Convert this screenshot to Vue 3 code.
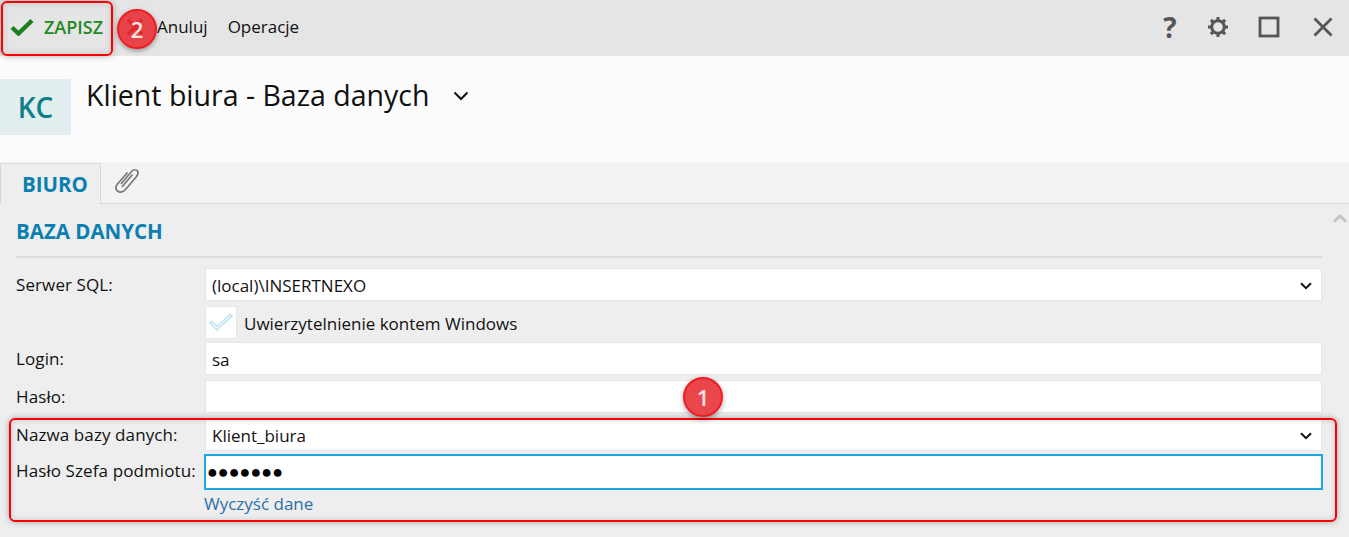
<template>
  <div class="window">
    <div class="toolbar">
      <button class="btn save">
        <svg width="24" height="18" viewBox="0 0 24 18"><path d="M2 9.500L8.500 15.500L22 2.500" fill="none" stroke="#1f7f1f" stroke-width="4.400"/></svg>
        <span>ZAPISZ</span>
      </button>
      <svg class="cancel-icon" width="16" height="18" viewBox="0 0 16 18"><path d="M1 1.500L15 16.500M15 1.500L1 16.500" fill="none" stroke="#7a1012" stroke-width="3.500"/></svg>
      <span class="tool-link">Anuluj</span>
      <span class="tool-link">Operacje</span>
      <div class="tool-icons">
        <span class="help">?</span>
        <svg class="gear" width="24" height="24" viewBox="0 0 24 24"><g fill="none" stroke="#555" stroke-width="3"><circle cx="12" cy="12" r="6.300"/><path d="M12 2v3.500M12 18.500v3.500M2 12h3.500M18.500 12h3.500M4.900 4.900l2.500 2.500M16.600 16.600l2.500 2.500M4.900 19.100l2.500-2.500M16.600 7.400l2.500-2.500"/></g></svg>
        <svg class="square" width="24" height="24" viewBox="0 0 24 24"><rect x="3" y="3" width="18" height="18" fill="none" stroke="#555" stroke-width="2.800"/></svg>
        <svg class="close" width="24" height="24" viewBox="0 0 24 24"><path d="M3.500 3.500L20.500 20.500M20.500 3.500L3.500 20.500" fill="none" stroke="#555" stroke-width="2.800"/></svg>
      </div>
    </div>

    <div class="header">
      <div class="avatar">KC</div>
      <h1>Klient biura - Baza danych</h1>
      <svg class="title-caret" width="16" height="10" viewBox="0 0 16 10"><path d="M1.500 1.500L8 8L14.500 1.500" fill="none" stroke="#111" stroke-width="2"/></svg>
    </div>

    <div class="tabs">
      <div class="tab">BIURO</div>
      <svg class="clip" width="26" height="28" viewBox="0 0 26 28"><path d="M7 17L17.500 4.500C19.500 2 22.500 2.500 23.500 4C24.500 5.500 24 7.500 22.500 9.500L11.500 22.500C9.500 25 6 26 3.500 24C1.500 22.300 1.500 19.500 3.500 17L13.500 5.500M8 20L18.500 7.500" fill="none" stroke="#777" stroke-width="1.700"/></svg>
    </div>

    <div class="content">
      <svg class="collapse" width="14" height="9" viewBox="0 0 14 9"><path d="M1 7.500L7 2L13 7.500" fill="none" stroke="#c4c4c4" stroke-width="3"/></svg>
      <h2>BAZA DANYCH</h2>
      <div class="form">
        <label class="lbl">Serwer SQL:</label>
        <div class="field">(local)\INSERTNEXO<svg class="caret" width="12" height="8" viewBox="0 0 12 8"><path d="M1 1.200L6 6.200L11 1.200" fill="none" stroke="#111" stroke-width="2"/></svg></div>

        <span></span>
        <div class="check-row">
          <div class="checkbox">
            <svg width="26" height="20" viewBox="0 0 26 20"><path d="M2 10L9 17L24 3L22 1.500L9 13.500L4 8.500Z" fill="#fff" stroke="#bfe3f3" stroke-width="1.600"/></svg>
          </div>
          <span class="check-text">Uwierzytelnienie kontem Windows</span>
        </div>

        <label class="lbl">Login:</label>
        <div class="field">sa</div>

        <label class="lbl">Hasło:</label>
        <div class="field"></div>

        <label class="lbl">Nazwa bazy danych:</label>
        <div class="field">Klient_biura<svg class="caret" width="12" height="8" viewBox="0 0 12 8"><path d="M1 1.200L6 6.200L11 1.200" fill="none" stroke="#111" stroke-width="2"/></svg></div>

        <label class="lbl">Hasło Szefa podmiotu:</label>
        <div class="field focused">●●●●●●●</div>

        <span></span>
        <a class="clear">Wyczyść dane</a>
      </div>
    </div>

    <div class="mark mark-save"></div>
    <div class="mark mark-form"></div>
    <div class="badge badge-two">2</div>
    <div class="badge badge-one">1</div>
  </div>
</template>

<script setup>
</script>

<style>
html, body {
  margin: 0;
  background: #eee;
}
</style>

<style scoped>
.window {
  position: relative;
  width: 1349px;
  height: 537px;
  overflow: hidden;
  background: #eeeeee;
  font-family: "Open Sans", "Noto Sans", sans-serif;
  font-size: 17px;
  color: #111;
}

.toolbar {
  box-sizing: border-box;
  display: flex;
  align-items: center;
  height: 56px;
  padding-bottom: 3px;
  background: #e5e5e5;
}

.btn {
  display: flex;
  align-items: center;
  gap: 10px;
  height: 53px;
  padding: 0 0 0 10px;
  width: 127px;
  border: 0;
  background: none;
  font: inherit;
}

.save span {
  color: #1f8a1f;
  font-size: 18px;
  font-weight: 600;
}

.cancel-icon {
  margin-right: 14px;
}

.tool-link {
  margin-right: 20px;
}

.tool-icons {
  display: flex;
  align-items: center;
  margin-left: auto;
  padding-right: 14px;
}

.gear {
  margin-left: 24px;
}

.square {
  margin-left: 27px;
}

.close {
  margin-left: 30px;
}

.help {
  width: 24px;
  text-align: center;
  font-size: 28px;
  font-weight: 700;
  line-height: 24px;
  color: #555;
}

.header {
  display: flex;
  align-items: flex-start;
  height: 106px;
  background: #fbfbfb;
}

.avatar {
  width: 71px;
  height: 56px;
  margin-top: 23px;
  background: #e2edf0;
  color: #0d7f86;
  font-size: 28px;
  font-weight: 600;
  line-height: 56px;
  text-align: center;
}

h1 {
  margin: 19px 0 0 15px;
  font-size: 28.500px;
  font-weight: 400;
  line-height: 40px;
}

.title-caret {
  margin: 35px 0 0 24px;
}

.tabs {
  display: flex;
  align-items: flex-end;
  height: 41px;
  background: #f3f3f3;
  border-bottom: 1px solid #d8d8d8;
}

.tab {
  box-sizing: border-box;
  width: 101px;
  height: 41px;
  margin-bottom: -1px;
  padding-left: 21px;
  background: #eeeeee;
  border: 1px solid #d8d8d8;
  border-bottom: 0;
  color: #0a7fb0;
  font-size: 20.500px;
  font-weight: 700;
  line-height: 41px;
}

.clip {
  margin: 0 0 8px 13px;
}

.content {
  position: relative;
  padding: 13px 27px 0 16px;
}

.collapse {
  position: absolute;
  top: 10px;
  right: 2px;
}

h2 {
  margin: 0;
  padding-bottom: 11px;
  border-bottom: 2px solid #dcdcdc;
  color: #0a7fb0;
  font-size: 20.500px;
  font-weight: 700;
  line-height: 28px;
}

.form {
  display: grid;
  grid-template-columns: 189px 1fr;
  margin-top: 10px;
}

.lbl {
  align-self: center;
  margin-bottom: 5px;
  letter-spacing: 0.1px;
}

.field {
  box-sizing: border-box;
  display: flex;
  align-items: center;
  justify-content: space-between;
  height: 33px;
  margin-bottom: 5px;
  padding: 2px 9px 0 6px;
  background: #fff;
  border: 1px solid #e6e6e6;
}

.check-row {
  display: flex;
  align-items: center;
  gap: 7px;
  height: 35px;
  margin-top: -1px;
  margin-bottom: 2px;
}

.check-text {
  padding-top: 2px;
}

.checkbox {
  box-sizing: border-box;
  display: flex;
  align-items: center;
  justify-content: center;
  width: 32px;
  height: 33px;
  background: #fff;
  border: 1px solid #e6e6e6;
}

.focused {
  height: 36px;
  margin: -2px -1px 0 -1px;
  padding: 0 9px 2px 1px;
  border: 2px solid #1ea7e6;
  font-size: 18px;
  color: #000;
}

.clear {
  margin: 2px 0 0 -1px;
  color: #2a6ea8;
}

.mark {
  position: absolute;
  box-sizing: border-box;
  border: 2px solid #f00;
  border-radius: 6px;
  box-shadow: 0 0 6px rgba(0, 0, 0, 0.3), inset 0 0 6px rgba(0, 0, 0, 0.15);
}

.mark-save {
  left: 1px;
  top: 1px;
  width: 112px;
  height: 55px;
}

.mark-form {
  left: 9px;
  top: 418px;
  width: 1328px;
  height: 104px;
}

.badge {
  position: absolute;
  width: 40px;
  height: 40px;
  box-sizing: border-box;
  border: 2px solid #ee1c25;
  border-radius: 50%;
  background: rgba(232, 44, 50, 0.88);
  box-shadow: 0 2px 5px rgba(0, 0, 0, 0.35);
  color: #ffe6e6;
  font-size: 22px;
  font-weight: 600;
  line-height: 36px;
  text-align: center;
}

.badge-two {
  left: 117px;
  top: 9px;
}

.badge-one {
  left: 683px;
  top: 377px;
}
</style>
